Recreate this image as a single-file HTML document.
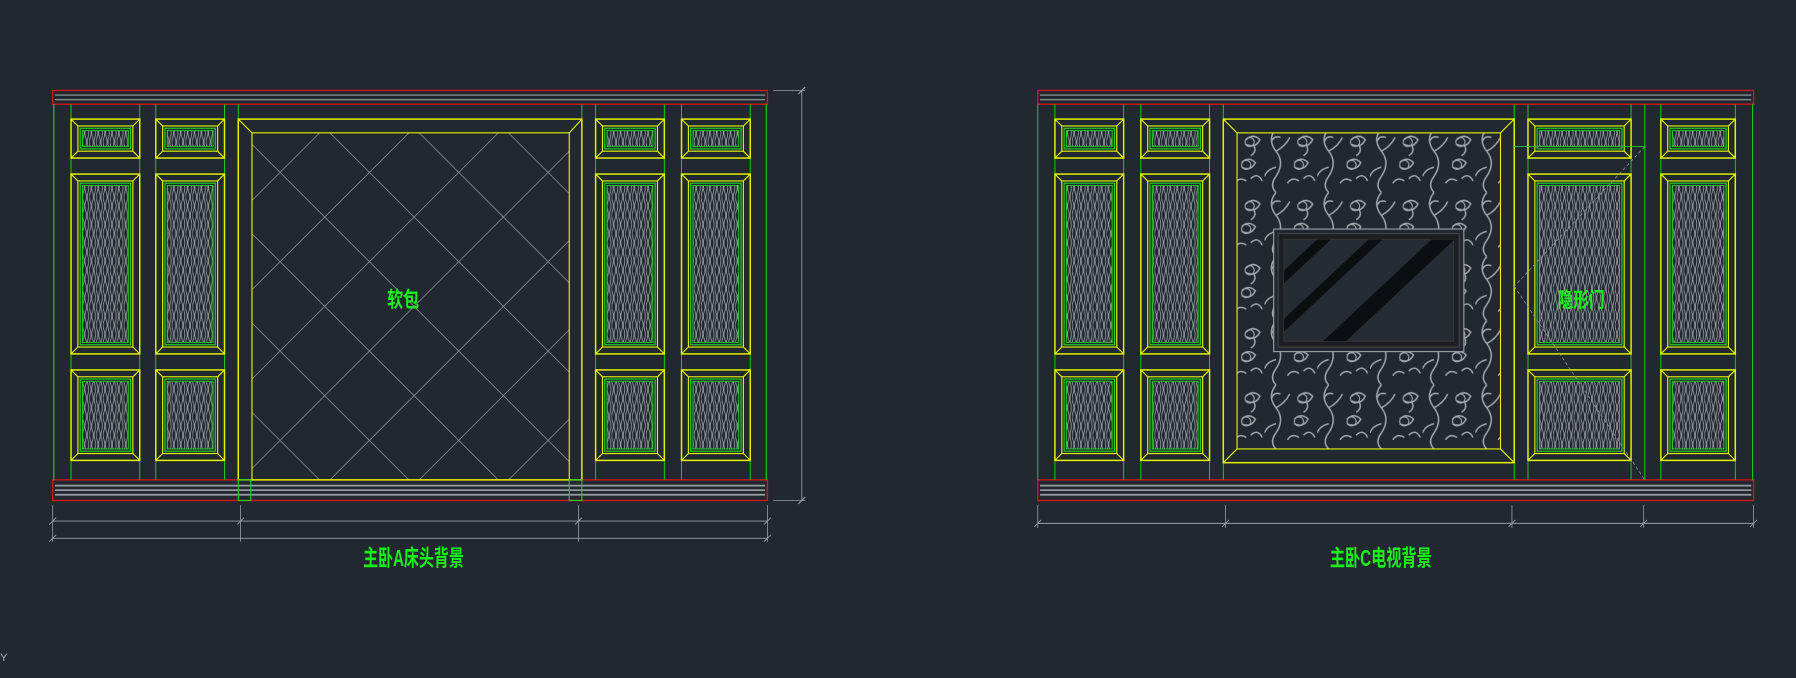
<!DOCTYPE html>
<html><head><meta charset="utf-8"><style>
html,body{margin:0;padding:0;background:#212830;overflow:hidden}
svg{display:block}
</style></head><body>
<svg id="s" width="1796" height="678" viewBox="0 0 1568 592" preserveAspectRatio="none" xmlns="http://www.w3.org/2000/svg">
<defs>
<pattern id="wood" width="6" height="16" patternUnits="userSpaceOnUse">
<path d="M0.8 0 q1.5 4 0 8 q-1.5 4 0 8 M2.8 0 q-1.5 4 0 8 q1.5 4 0 8 M4.8 0 q1.2 4 0 8 q-1.2 4 0 8" stroke="#9a9ea2" stroke-width="0.7" fill="none"/>
</pattern>
<pattern id="flor" width="46" height="56" patternUnits="userSpaceOnUse">
<path d="M10 0 q-8 10 0 20 q8 10 0 22 q-6 8 0 14 M10 20 q8 -4 12 -12 M10 34 q-8 2 -10 8 M30 10 q6 -6 12 0 q-4 8 -12 4 M26 30 q6 -6 12 0 q-4 8 -12 4 M34 44 q6 -6 10 2 M20 48 q4 -6 10 -2 M36 14 q4 6 -2 10 M14 8 q-6 -2 -8 4" stroke="#a2a6aa" stroke-width="1.3" fill="none"/>
<circle cx="33" cy="12" r="4" fill="none" stroke="#a2a6aa" stroke-width="1"/>
<circle cx="30" cy="32" r="4" fill="none" stroke="#a2a6aa" stroke-width="1"/>
</pattern>
</defs>
<g id="g" fill="none"></g>
<g font-family="'Liberation Sans','Noto Sans CJK SC',sans-serif" fill="#19f019" font-weight="bold">
<text x="338" y="268" font-size="19" textLength="28" lengthAdjust="spacingAndGlyphs">软包</text>
<text x="317" y="494" font-size="20" textLength="88" lengthAdjust="spacingAndGlyphs">主卧A床头背景</text>
<text x="1360" y="268" font-size="18" textLength="41" lengthAdjust="spacingAndGlyphs">隐形门</text>
<text x="1161" y="494" font-size="20" textLength="89" lengthAdjust="spacingAndGlyphs">主卧C电视背景</text>
</g>
<text x="0" y="577" font-size="10" fill="#aaa" font-family="'Liberation Sans',sans-serif">Y</text>
</svg>
<script>
var g=document.getElementById('g'),h='';
var Y='#e2f200',G='#1fd01f',R='#d01818',GR='#9a9ea2';
function r(x,y,w,hh,c,sw,f){h+='<rect x="'+x+'" y="'+y+'" width="'+w+'" height="'+hh+'" stroke="'+c+'" stroke-width="'+(sw||1)+'" fill="'+(f||'none')+'"/>';}
function l(a,b,c,d,col,sw,da){h+='<line x1="'+a+'" y1="'+b+'" x2="'+c+'" y2="'+d+'" stroke="'+col+'" stroke-width="'+(sw||1)+'"'+(da?' stroke-dasharray="'+da+'"':'')+'/>';}
function panel(x,y,w,hh){var i=6;
 r(x+i+4,y+i+4,w-2*i-8,hh-2*i-8,'none',0,'url(#wood)');
 r(x,y,w,hh,Y,1.3);r(x+i,y+i,w-2*i,hh-2*i,Y,1);
 l(x,y,x+i,y+i,Y);l(x+w,y,x+w-i,y+i,Y);l(x,y+hh,x+i,y+hh-i,Y);l(x+w,y+hh,x+w-i,y+hh-i,Y);
 r(x+i+2,y+i+2,w-2*i-4,hh-2*i-4,G,1);r(x+i+4,y+i+4,w-2*i-8,hh-2*i-8,G,0.8);}
function frame(x0,x1){
 r(x0,79,x1-x0,12,R,1.2);l(x0+2,83,x1-2,83,GR);l(x0+2,87,x1-2,87,GR);
 r(x0,419,x1-x0,18,R,1.2);l(x0+2,424,x1-2,424,GR,1.5);l(x0+2,428,x1-2,428,GR,1.5);l(x0+2,432,x1-2,432,GR,1.5);
}
function col(x,w){l(x,91,x,419,G,0.8);l(x+w,91,x+w,419,G,0.8);panel(x,104,w,34);panel(x,152,w,157);panel(x,323,w,79);}
frame(46,670);l(47,91,47,419,G);l(669,91,669,419,G);l(208,91,208,419,G,0.8);l(508,91,508,419,G,0.8);
[62,136,520,595].forEach(function(x){col(x,60)});
h+='<clipPath id="c1"><rect x="220" y="116" width="277" height="303"/></clipPath><g clip-path="url(#c1)">';
for(var k=-400;k<700;k+=78){l(220+k,116,220+k+303,419,'#8a8e92',0.7);l(220+k,419,220+k+303,116,'#8a8e92',0.7);}
h+='</g>';
r(208,104,300,315,Y,1.3);l(220,116,220,419,Y);l(497,116,497,419,Y);l(220,116,497,116,Y);l(208,104,220,116,Y);l(508,104,497,116,Y);
r(208,419,11,18,G);r(497,419,11,18,G);
l(46,455,670,455,GR,0.8);l(46,470,670,470,GR,0.8);
[46,210,505,670].forEach(function(x){l(x,441,x,473,GR,0.7);l(x-3,458,x+3,452,GR,0.8)});l(43,473,49,467,GR,0.8);l(667,473,673,467,GR,0.8);
l(700,79,700,437,GR,0.8);l(675,79,703,79,GR,0.7);l(675,437,703,437,GR,0.7);l(697,82,703,76,GR);l(697,440,703,434,GR);
frame(906,1531);
[906,1068,1322,1436,1530].forEach(function(x){l(x,91,x,419,G,0.8)});
col(921,60);col(996,60);col(1334,90);col(1450,65);
r(1080,116,230,276,'none',0,'url(#flor)');
r(1068,104,254,300,Y,1.3);r(1080,116,230,276,Y,1);
l(1068,104,1080,116,Y);l(1322,104,1310,116,Y);l(1068,404,1080,392,Y);l(1322,404,1310,392,Y);
r(1112,200,166,107,GR,1,'#222831');r(1116,204,158,99,'#444',1,'#1b1f24');r(1121,209,148,89,'#333',1,'#262c34');
h+='<clipPath id="c2"><rect x="1121" y="209" width="148" height="89"/></clipPath><g clip-path="url(#c2)">';
[[1150,0],[1195,0],[1250,8]].forEach(function(p){h+='<polygon points="'+(p[0])+',209 '+(p[0]+12+p[1])+',209 '+(p[0]+12+p[1]-95)+',298 '+(p[0]-95)+',298" fill="#0c0f12"/>'});
h+='</g>';
l(1322,128,1436,128,G,0.8);l(1436,128,1322,250,GR,0.6,'3 2');l(1322,250,1436,419,GR,0.6,'3 2');
l(906,457,1531,457,GR,0.8);
[906,1070,1320,1435,1531].forEach(function(x){l(x,441,x,461,GR,0.7);l(x-3,460,x+3,454,GR,0.8)});
g.innerHTML=h;
</script>
</body></html>
